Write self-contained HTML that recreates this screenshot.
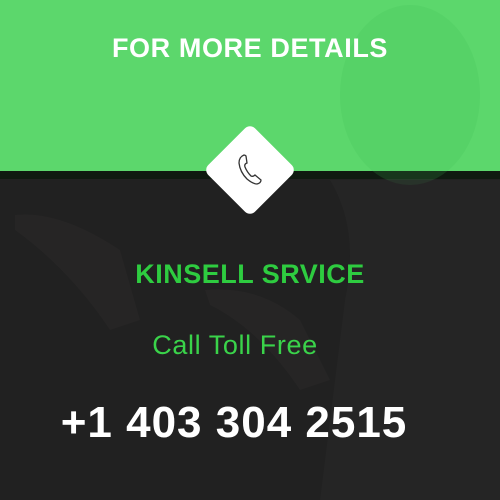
<!DOCTYPE html>
<html><head><style>
html,body{margin:0;padding:0}
body{width:500px;height:500px;position:relative;overflow:hidden;background:#212121;font-family:"Liberation Sans",sans-serif}
.top{position:absolute;left:0;top:0;width:500px;height:171px;background:#5cd76c}
.band{position:absolute;left:0;top:171px;width:500px;height:8px;background:#0f1a10}
.t{position:absolute;left:0;width:500px;text-align:center;white-space:nowrap}
</style></head><body>
<div class="top"></div>
<div class="band"></div>
<svg style="position:absolute;left:0;top:0" width="500" height="500">
 <ellipse cx="410" cy="95" rx="70" ry="90" fill="#3fbf52" opacity="0.18"/>
 <path d="M330 180 Q360 230 345 300 L320 500 L500 500 L500 180 Z" fill="#2a2a2a" opacity="0.5"/>
 <path d="M15 215 Q60 210 120 250 L140 320 L110 330 Q70 270 15 230 Z" fill="#2b2a29" opacity="0.5"/>
 <path d="M205 290 Q260 285 300 320 L330 380 L300 390 Q260 330 210 305 Z" fill="#2b2a29" opacity="0.5"/>
</svg>
<div class="t" style="top:33px;font-size:27px;font-weight:bold;color:#fff;letter-spacing:0.6px">FOR MORE DETAILS</div>
<div style="position:absolute;left:217px;top:137px;width:66px;height:66px;background:#fff;border-radius:7px;transform:rotate(45deg)"></div>
<svg style="position:absolute;left:235px;top:152px" width="30" height="36" viewBox="0 0 30 36">
 <path d="M9 3 Q4 5 4 11 Q5 20 12 27 Q18 32 22 32 Q26 31 26 28 L20 23 Q18 25 16 24 Q12 20 10 15 Q9 12 12 11 L11 4 Q10 3 9 3 Z" fill="none" stroke="#333" stroke-width="1.3"/>
</svg>
<div class="t" style="top:259px;font-size:27px;font-weight:bold;color:#2ecc40;letter-spacing:0.5px">KINSELL SRVICE</div>
<div class="t" style="top:330px;left:-15px;font-size:27px;color:#3ad34a;letter-spacing:0.6px">Call Toll Free</div>
<div class="t" style="top:398px;left:-16px;font-size:44px;font-weight:bold;color:#fff;letter-spacing:1px">+1 403 304 2515</div>
</body></html>
